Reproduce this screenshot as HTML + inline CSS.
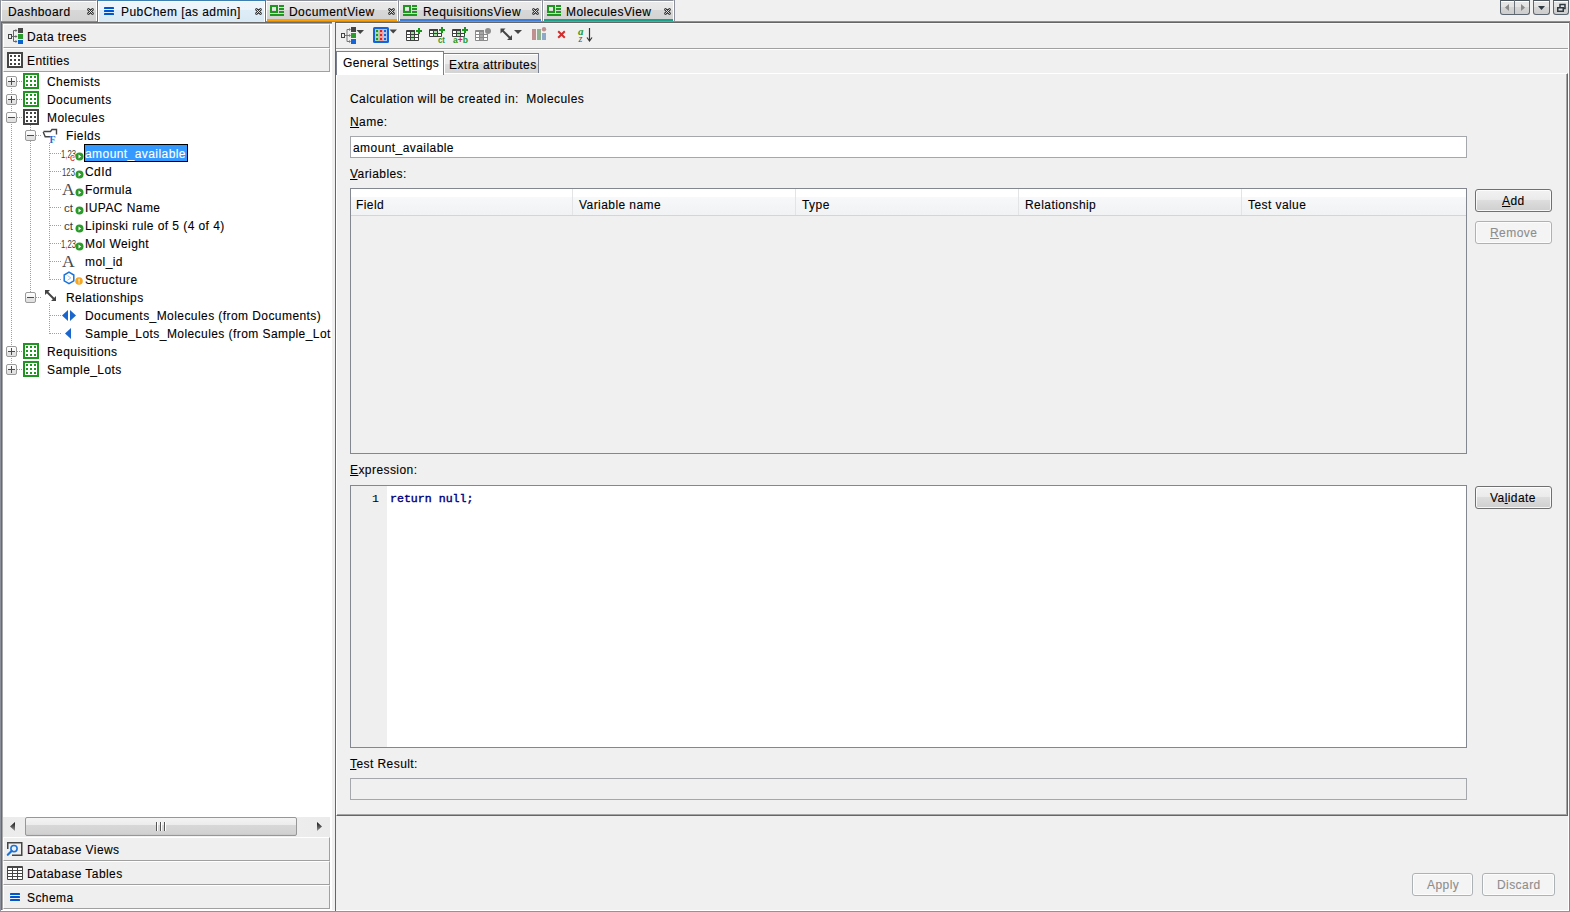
<!DOCTYPE html>
<html><head><meta charset="utf-8">
<style>
*{box-sizing:border-box;margin:0;padding:0}
html,body{width:1570px;height:912px;overflow:hidden;background:#f0f0f0;position:relative;font-family:"Liberation Sans",sans-serif;font-size:12px;color:#000}
.a{position:absolute}
svg.a{overflow:visible}
.t{position:absolute;white-space:pre;line-height:14px;font-size:12px;letter-spacing:0.43px;-webkit-text-stroke:0.1px currentColor}
.tb{position:absolute;top:0;height:21px;border-top:1px solid #8a8f9a;background:linear-gradient(#fff 0,#fff 1px,#e9e9e9 1px,#e6e6e6 9px,#d8d8d8 9px,#d2d2d2 100%)}
.tb .ul{position:absolute;bottom:0;height:2px}
.hdr{position:absolute;left:3px;width:327px;height:24px;background:#efefef;border-top:1px solid #fff;border-left:1px solid #fff;border-bottom:1px solid #a0a0a0;border-right:1px solid #a0a0a0}
.btn{position:absolute;border:1px solid #707070;border-radius:3px;background:linear-gradient(#f2f2f2 0,#ebebeb 45%,#dddddd 50%,#cfcfcf 100%);box-shadow:inset 0 0 0 1px rgba(255,255,255,0.8)}
.btnd{position:absolute;border:1px solid #adb2b5;border-radius:3px;background:#f4f4f4;box-shadow:inset 0 0 0 1px #fcfcfc}
.u{text-decoration:underline;text-underline-offset:1px;text-decoration-thickness:1px}
.gray{color:#8d8d8d}
</style></head><body>
<svg width="0" height="0" style="position:absolute"><defs><linearGradient id="eg" x1="0" y1="0" x2="0" y2="1"><stop offset="0" stop-color="#fff"/><stop offset="0.5" stop-color="#f4f4f4"/><stop offset="0.55" stop-color="#e4e4e4"/><stop offset="1" stop-color="#e0e0e0"/></linearGradient></defs></svg>

<!-- ===== TAB BAR ===== -->
<div class="a" style="left:0;top:0;width:1px;height:912px;background:#8a8f9a"></div>
<div class="tb" style="left:1px;width:96px;border-left:1px solid #fff;border-right:1px solid #fff"></div>
<div class="t" style="left:8px;top:5px">Dashboard</div>

<div class="a" style="left:97px;top:0;width:169px;height:22px;border:1px solid #3c7fb1;border-bottom:none;background:linear-gradient(#fff 0,#fff 1px,#eef6fb 1px,#ecf5fb 9px,#deedf7 9px,#d9e9f5 100%);box-shadow:inset 1px 0 0 #fff,inset -1px 0 0 #fff"></div>
<div class="t" style="left:121px;top:5px">PubChem [as admin]</div>

<div class="tb" style="left:266px;width:132px;border-left:1px solid #fff;border-right:1px solid #fff"><div class="ul" style="left:0;right:0;background:#ff9f00"></div></div>
<div class="t" style="left:289px;top:5px">DocumentView</div>
<div class="a" style="left:398px;top:0;width:1px;height:21px;background:#8a8f9a"></div>
<div class="tb" style="left:399px;width:143px;border-left:1px solid #fff;border-right:1px solid #fff"><div class="ul" style="left:0;right:0;background:#3b7ddd"></div></div>
<div class="t" style="left:423px;top:5px">RequisitionsView</div>
<div class="a" style="left:542px;top:0;width:1px;height:21px;background:#8a8f9a"></div>
<div class="tb" style="left:543px;width:131px;border-left:1px solid #fff;border-right:1px solid #fff"><div class="ul" style="left:0;right:0;background:#18a18a"></div></div>
<div class="t" style="left:566px;top:5px">MoleculesView</div>
<div class="a" style="left:674px;top:0;width:1px;height:21px;background:#8a8f9a"></div>
<svg class="a" style="left:87px;top:8px" width="8" height="8"><path d="M1.5 1.5 L5.5 5.5 M5.5 1.5 L1.5 5.5" stroke="#333" stroke-width="2.7" stroke-linecap="round"/><path d="M1.5 1.5 L5.5 5.5 M5.5 1.5 L1.5 5.5" stroke="#f0f0f0" stroke-width="0.9" stroke-linecap="round"/></svg>
<svg class="a" style="left:255px;top:8px" width="8" height="8"><path d="M1.5 1.5 L5.5 5.5 M5.5 1.5 L1.5 5.5" stroke="#333" stroke-width="2.7" stroke-linecap="round"/><path d="M1.5 1.5 L5.5 5.5 M5.5 1.5 L1.5 5.5" stroke="#f0f0f0" stroke-width="0.9" stroke-linecap="round"/></svg>
<svg class="a" style="left:388px;top:8px" width="8" height="8"><path d="M1.5 1.5 L5.5 5.5 M5.5 1.5 L1.5 5.5" stroke="#333" stroke-width="2.7" stroke-linecap="round"/><path d="M1.5 1.5 L5.5 5.5 M5.5 1.5 L1.5 5.5" stroke="#f0f0f0" stroke-width="0.9" stroke-linecap="round"/></svg>
<svg class="a" style="left:532px;top:8px" width="8" height="8"><path d="M1.5 1.5 L5.5 5.5 M5.5 1.5 L1.5 5.5" stroke="#333" stroke-width="2.7" stroke-linecap="round"/><path d="M1.5 1.5 L5.5 5.5 M5.5 1.5 L1.5 5.5" stroke="#f0f0f0" stroke-width="0.9" stroke-linecap="round"/></svg>
<svg class="a" style="left:664px;top:8px" width="8" height="8"><path d="M1.5 1.5 L5.5 5.5 M5.5 1.5 L1.5 5.5" stroke="#333" stroke-width="2.7" stroke-linecap="round"/><path d="M1.5 1.5 L5.5 5.5 M5.5 1.5 L1.5 5.5" stroke="#f0f0f0" stroke-width="0.9" stroke-linecap="round"/></svg>
<svg class="a" style="left:104px;top:7px" width="10" height="8"><g fill="#0055cc"><rect x="0" y="0" width="10" height="2" rx="0.6"/><rect x="0" y="3" width="10" height="2" rx="0.6"/><rect x="0" y="6" width="10" height="2" rx="0.6"/></g></svg>
<svg class="a" style="left:270px;top:5px" width="14" height="11"><rect x="1" y="1" width="6" height="6" fill="none" stroke="#1f961f" stroke-width="2"/><g fill="#1f961f"><rect x="9" y="0" width="5" height="2"/><rect x="9" y="3" width="5" height="2"/><rect x="9" y="6" width="5" height="2"/><rect x="0" y="9" width="14" height="2"/></g></svg>
<svg class="a" style="left:403px;top:5px" width="14" height="11"><rect x="1" y="1" width="6" height="6" fill="none" stroke="#1f961f" stroke-width="2"/><g fill="#1f961f"><rect x="9" y="0" width="5" height="2"/><rect x="9" y="3" width="5" height="2"/><rect x="9" y="6" width="5" height="2"/><rect x="0" y="9" width="14" height="2"/></g></svg>
<svg class="a" style="left:547px;top:5px" width="14" height="11"><rect x="1" y="1" width="6" height="6" fill="none" stroke="#1f961f" stroke-width="2"/><g fill="#1f961f"><rect x="9" y="0" width="5" height="2"/><rect x="9" y="3" width="5" height="2"/><rect x="9" y="6" width="5" height="2"/><rect x="0" y="9" width="14" height="2"/></g></svg>

<!-- window buttons -->
<div class="a" style="left:1500px;top:0;width:30px;height:15px;border:1px solid #5c666e;border-top:1px solid #4a545c;border-radius:0 0 3px 3px;background:linear-gradient(#fff 0,#fff 1px,#e6e6e6 1px,#e3e3e3 6px,#d6d6d6 6px,#cdcdcd 100%)"></div>
<div class="a" style="left:1533px;top:0;width:17px;height:15px;border:1px solid #5c666e;border-top:1px solid #4a545c;border-radius:0 0 3px 3px;background:linear-gradient(#fff 0,#fff 1px,#e6e6e6 1px,#e3e3e3 6px,#d6d6d6 6px,#cdcdcd 100%)"></div>
<div class="a" style="left:1553px;top:0;width:16px;height:15px;border:1px solid #5c666e;border-top:1px solid #4a545c;border-radius:0 0 3px 3px;background:linear-gradient(#fff 0,#fff 1px,#e6e6e6 1px,#e3e3e3 6px,#d6d6d6 6px,#cdcdcd 100%)"></div>
<div class="a" style="left:1514px;top:0;width:1px;height:14px;background:#6a7178"></div>
<svg class="a" style="left:1494px;top:0" width="80" height="20"><path d="M15 4 L11 7.5 L15 11Z" fill="#8a8a8a"/><path d="M27 4 L31 7.5 L27 11Z" fill="#8a8a8a"/><path d="M44 6 L51 6 L47.5 10Z" fill="#2e3a42"/><rect x="66" y="4.5" width="5" height="4" fill="none" stroke="#2e3a42" stroke-width="1.5"/><rect x="63.75" y="7.75" width="5.5" height="3.5" fill="#e0e0e0" stroke="#2e3a42" stroke-width="1.5"/></svg>

<!-- dark line under tabs -->
<div class="a" style="left:1px;top:21px;width:96px;height:1px;background:#8a909a"></div>
<div class="a" style="left:266px;top:21px;width:1304px;height:1px;background:#8a909a"></div>
<div class="a" style="left:1px;top:22px;width:331px;height:1px;background:#6a6a6a"></div>
<div class="a" style="left:335px;top:22px;width:1234px;height:1px;background:#666"></div>

<!-- ===== LEFT PANEL ===== -->
<div class="a" style="left:1px;top:22px;width:1px;height:888px;background:#6a6a6a"></div>
<div class="a" style="left:2px;top:23px;width:1px;height:887px;background:#a8a8a8"></div>
<div class="a" style="left:2px;top:23px;width:330px;height:1px;background:#a8a8a8"></div>
<div class="a" style="left:3px;top:24px;width:329px;height:886px;background:#fff"></div>
<div class="hdr" style="top:24px"></div>
<div class="t" style="left:27px;top:30px">Data trees</div>
<div class="hdr" style="top:48px"></div>
<div class="t" style="left:27px;top:54px">Entities</div>
<svg class="a" style="left:4px;top:26px" width="20" height="20"><rect x="4.5" y="8.5" width="3" height="4" fill="none" stroke="#444" stroke-width="1"/><path d="M7.5 10.5 H10 M9.5 4.5 V15.5 M9.5 4.5 H12 M9.5 10.5 H12 M9.5 15.5 H12" stroke="#666" stroke-width="1" fill="none"/><path d="M11.5 3 L13.5 4.5 L11.5 6Z M11.5 9 L13.5 10.5 L11.5 12Z M11.5 14 L13.5 15.5 L11.5 17Z" fill="#666"/><rect x="14" y="2" width="5" height="5" fill="#484848"/><rect x="14" y="8" width="5" height="5" fill="#2a9a2a"/><rect x="14" y="14" width="5" height="4" fill="#0a62d0"/></svg>
<svg class="a" style="left:7px;top:52px" width="16" height="16"><rect x="1" y="1" width="14" height="14" fill="#fff" stroke="#444" stroke-width="2"/><g fill="#444"><rect x="3" y="3" width="2" height="2"/><rect x="3" y="7" width="2" height="2"/><rect x="3" y="11" width="2" height="2"/><rect x="7" y="3" width="2" height="2"/><rect x="7" y="7" width="2" height="2"/><rect x="7" y="11" width="2" height="2"/><rect x="11" y="3" width="2" height="2"/><rect x="11" y="7" width="2" height="2"/><rect x="11" y="11" width="2" height="2"/></g></svg>

<!-- tree -->
<div class="a" style="left:3px;top:72px;width:328px;height:745px;overflow:hidden"><div class="a" style="left:-3px;top:-72px;width:1570px;height:912px">
<div class="a" style="left:11px;top:88px;width:1px;height:276px;background:repeating-linear-gradient(180deg,#a0a0a0 0,#a0a0a0 1px,transparent 1px,transparent 2px)"></div>
<div class="a" style="left:30px;top:125px;width:1px;height:167px;background:repeating-linear-gradient(180deg,#a0a0a0 0,#a0a0a0 1px,transparent 1px,transparent 2px)"></div>
<div class="a" style="left:49px;top:143px;width:1px;height:137px;background:repeating-linear-gradient(180deg,#a0a0a0 0,#a0a0a0 1px,transparent 1px,transparent 2px)"></div>
<div class="a" style="left:49px;top:303px;width:1px;height:31px;background:repeating-linear-gradient(180deg,#a0a0a0 0,#a0a0a0 1px,transparent 1px,transparent 2px)"></div>
<div class="a" style="left:17px;top:81px;width:6px;height:1px;background:repeating-linear-gradient(90deg,#a0a0a0 0,#a0a0a0 1px,transparent 1px,transparent 2px)"></div>
<svg class="a" style="left:6px;top:76px" width="11" height="11"><rect x="0.5" y="0.5" width="10" height="10" rx="1.5" fill="url(#eg)" stroke="#9a9a9a"/><rect x="2" y="5" width="7" height="1" fill="#2d4f8e"/><rect x="5" y="2" width="1" height="7" fill="#2d4f8e"/></svg>
<svg class="a" style="left:23px;top:73px" width="16" height="16"><rect x="1" y="1" width="14" height="14" fill="#fff" stroke="#1f961f" stroke-width="2"/><g fill="#1f961f"><rect x="3" y="3" width="2" height="2"/><rect x="3" y="7" width="2" height="2"/><rect x="3" y="11" width="2" height="2"/><rect x="7" y="3" width="2" height="2"/><rect x="7" y="7" width="2" height="2"/><rect x="7" y="11" width="2" height="2"/><rect x="11" y="3" width="2" height="2"/><rect x="11" y="7" width="2" height="2"/><rect x="11" y="11" width="2" height="2"/></g></svg>
<div class="t" style="left:47px;top:75px;">Chemists</div>
<div class="a" style="left:17px;top:99px;width:6px;height:1px;background:repeating-linear-gradient(90deg,#a0a0a0 0,#a0a0a0 1px,transparent 1px,transparent 2px)"></div>
<svg class="a" style="left:6px;top:94px" width="11" height="11"><rect x="0.5" y="0.5" width="10" height="10" rx="1.5" fill="url(#eg)" stroke="#9a9a9a"/><rect x="2" y="5" width="7" height="1" fill="#2d4f8e"/><rect x="5" y="2" width="1" height="7" fill="#2d4f8e"/></svg>
<svg class="a" style="left:23px;top:91px" width="16" height="16"><rect x="1" y="1" width="14" height="14" fill="#fff" stroke="#1f961f" stroke-width="2"/><g fill="#1f961f"><rect x="3" y="3" width="2" height="2"/><rect x="3" y="7" width="2" height="2"/><rect x="3" y="11" width="2" height="2"/><rect x="7" y="3" width="2" height="2"/><rect x="7" y="7" width="2" height="2"/><rect x="7" y="11" width="2" height="2"/><rect x="11" y="3" width="2" height="2"/><rect x="11" y="7" width="2" height="2"/><rect x="11" y="11" width="2" height="2"/></g></svg>
<div class="t" style="left:47px;top:93px;">Documents</div>
<div class="a" style="left:17px;top:117px;width:6px;height:1px;background:repeating-linear-gradient(90deg,#a0a0a0 0,#a0a0a0 1px,transparent 1px,transparent 2px)"></div>
<svg class="a" style="left:6px;top:112px" width="11" height="11"><rect x="0.5" y="0.5" width="10" height="10" rx="1.5" fill="url(#eg)" stroke="#9a9a9a"/><rect x="2" y="5" width="7" height="1" fill="#2d4f8e"/></svg>
<svg class="a" style="left:23px;top:109px" width="16" height="16"><rect x="1" y="1" width="14" height="14" fill="#fff" stroke="#444" stroke-width="2"/><g fill="#444"><rect x="3" y="3" width="2" height="2"/><rect x="3" y="7" width="2" height="2"/><rect x="3" y="11" width="2" height="2"/><rect x="7" y="3" width="2" height="2"/><rect x="7" y="7" width="2" height="2"/><rect x="7" y="11" width="2" height="2"/><rect x="11" y="3" width="2" height="2"/><rect x="11" y="7" width="2" height="2"/><rect x="11" y="11" width="2" height="2"/></g></svg>
<div class="t" style="left:47px;top:111px;">Molecules</div>
<div class="a" style="left:36px;top:135px;width:6px;height:1px;background:repeating-linear-gradient(90deg,#a0a0a0 0,#a0a0a0 1px,transparent 1px,transparent 2px)"></div>
<svg class="a" style="left:25px;top:130px" width="11" height="11"><rect x="0.5" y="0.5" width="10" height="10" rx="1.5" fill="url(#eg)" stroke="#9a9a9a"/><rect x="2" y="5" width="7" height="1" fill="#2d4f8e"/></svg>
<svg class="a" style="left:42px;top:127px" width="16" height="17"><path d="M1.5 4.5 H8.5 L10 2.5 H14.5 V7.5" fill="none" stroke="#444" stroke-width="1.4"/><path d="M1.2 5 L3.2 9.8 H8.5" fill="none" stroke="#444" stroke-width="1.4"/><text x="7.5" y="15.5" font-family="Liberation Serif" font-weight="bold" font-size="10" fill="#1c6fd6">F</text></svg>
<div class="t" style="left:66px;top:129px;">Fields</div>
<div class="a" style="left:50px;top:153px;width:11px;height:1px;background:repeating-linear-gradient(90deg,#a0a0a0 0,#a0a0a0 1px,transparent 1px,transparent 2px)"></div>
<svg class="a" style="left:61px;top:144px" width="22" height="18"><text x="0" y="13.5" font-family="Liberation Sans" font-size="11.5" fill="#3c3c3c" textLength="15" lengthAdjust="spacingAndGlyphs">1<tspan fill="#d22">,</tspan>23</text></svg>
<svg class="a" style="left:69px;top:144px" width="9" height="18"><text x="1" y="16.5" font-family="Liberation Sans" font-size="10" fill="#d22" stroke="#fff" stroke-width="1.5" paint-order="stroke">c</text></svg>
<svg class="a" style="left:75px;top:152px" width="9" height="9"><circle cx="4.5" cy="4.5" r="4" fill="#2b9a2b"/><path d="M3.5 2.5 L6.2 4.5 L3.5 6.5Z" fill="#fff"/></svg>
<div class="a" style="left:84px;top:144px;width:104px;height:18px;background:#3399ff;border:1px solid #000"></div>
<div class="t" style="left:85px;top:147px;color:#fff">amount_available</div>
<div class="a" style="left:50px;top:171px;width:11px;height:1px;background:repeating-linear-gradient(90deg,#a0a0a0 0,#a0a0a0 1px,transparent 1px,transparent 2px)"></div>
<svg class="a" style="left:62px;top:162px" width="16" height="18"><text x="0" y="13.5" font-family="Liberation Sans" font-size="11" fill="#3c3c3c" textLength="13" lengthAdjust="spacingAndGlyphs">123</text></svg>
<svg class="a" style="left:75px;top:170px" width="9" height="9"><circle cx="4.5" cy="4.5" r="4" fill="#2b9a2b"/><path d="M3.5 2.5 L6.2 4.5 L3.5 6.5Z" fill="#fff"/></svg>
<div class="t" style="left:85px;top:165px;">CdId</div>
<div class="a" style="left:50px;top:189px;width:11px;height:1px;background:repeating-linear-gradient(90deg,#a0a0a0 0,#a0a0a0 1px,transparent 1px,transparent 2px)"></div>
<svg class="a" style="left:61px;top:180px" width="16" height="18"><text x="1" y="15" font-family="Liberation Serif" font-size="17.5" fill="#4a4a4a">A</text></svg>
<svg class="a" style="left:75px;top:188px" width="9" height="9"><circle cx="4.5" cy="4.5" r="4" fill="#2b9a2b"/><path d="M3.5 2.5 L6.2 4.5 L3.5 6.5Z" fill="#fff"/></svg>
<div class="t" style="left:85px;top:183px;">Formula</div>
<div class="a" style="left:50px;top:207px;width:11px;height:1px;background:repeating-linear-gradient(90deg,#a0a0a0 0,#a0a0a0 1px,transparent 1px,transparent 2px)"></div>
<svg class="a" style="left:64px;top:198px" width="14" height="18"><text x="0" y="13.5" font-family="Liberation Sans" font-size="11.5" fill="#3c3c3c" textLength="9" lengthAdjust="spacingAndGlyphs">ct</text></svg>
<svg class="a" style="left:75px;top:206px" width="9" height="9"><circle cx="4.5" cy="4.5" r="4" fill="#2b9a2b"/><path d="M3.5 2.5 L6.2 4.5 L3.5 6.5Z" fill="#fff"/></svg>
<div class="t" style="left:85px;top:201px;">IUPAC Name</div>
<div class="a" style="left:50px;top:225px;width:11px;height:1px;background:repeating-linear-gradient(90deg,#a0a0a0 0,#a0a0a0 1px,transparent 1px,transparent 2px)"></div>
<svg class="a" style="left:64px;top:216px" width="14" height="18"><text x="0" y="13.5" font-family="Liberation Sans" font-size="11.5" fill="#3c3c3c" textLength="9" lengthAdjust="spacingAndGlyphs">ct</text></svg>
<svg class="a" style="left:75px;top:224px" width="9" height="9"><circle cx="4.5" cy="4.5" r="4" fill="#2b9a2b"/><path d="M3.5 2.5 L6.2 4.5 L3.5 6.5Z" fill="#fff"/></svg>
<div class="t" style="left:85px;top:219px;">Lipinski rule of 5 (4 of 4)</div>
<div class="a" style="left:50px;top:243px;width:11px;height:1px;background:repeating-linear-gradient(90deg,#a0a0a0 0,#a0a0a0 1px,transparent 1px,transparent 2px)"></div>
<svg class="a" style="left:61px;top:234px" width="22" height="18"><text x="0" y="13.5" font-family="Liberation Sans" font-size="11.5" fill="#3c3c3c" textLength="15" lengthAdjust="spacingAndGlyphs">1<tspan fill="#d22">,</tspan>23</text></svg>
<svg class="a" style="left:75px;top:242px" width="9" height="9"><circle cx="4.5" cy="4.5" r="4" fill="#2b9a2b"/><path d="M3.5 2.5 L6.2 4.5 L3.5 6.5Z" fill="#fff"/></svg>
<div class="t" style="left:85px;top:237px;">Mol Weight</div>
<div class="a" style="left:50px;top:261px;width:11px;height:1px;background:repeating-linear-gradient(90deg,#a0a0a0 0,#a0a0a0 1px,transparent 1px,transparent 2px)"></div>
<svg class="a" style="left:61px;top:252px" width="16" height="18"><text x="1" y="15" font-family="Liberation Serif" font-size="17.5" fill="#4a4a4a">A</text></svg>
<div class="t" style="left:85px;top:255px;">mol_id</div>
<div class="a" style="left:50px;top:279px;width:11px;height:1px;background:repeating-linear-gradient(90deg,#a0a0a0 0,#a0a0a0 1px,transparent 1px,transparent 2px)"></div>
<svg class="a" style="left:63px;top:271px" width="13" height="14"><path d="M6 1.2 L10.8 4 V9.8 L6 12.6 L1.2 9.8 V4Z" fill="#fff" stroke="#1a73d9" stroke-width="1.5"/><path d="M4.5 4.5 L7.8 6.9 L4.5 9.3" fill="none" stroke="#8ab8ee" stroke-width="0.8"/></svg>
<svg class="a" style="left:75px;top:277px" width="8" height="8"><circle cx="4" cy="4" r="3.8" fill="#f5a623"/><rect x="3.5" y="1.8" width="1.1" height="2.8" fill="#fff"/><rect x="3.5" y="5.4" width="1.1" height="1" fill="#fff"/></svg>
<div class="t" style="left:85px;top:273px;">Structure</div>
<div class="a" style="left:36px;top:297px;width:6px;height:1px;background:repeating-linear-gradient(90deg,#a0a0a0 0,#a0a0a0 1px,transparent 1px,transparent 2px)"></div>
<svg class="a" style="left:25px;top:292px" width="11" height="11"><rect x="0.5" y="0.5" width="10" height="10" rx="1.5" fill="url(#eg)" stroke="#9a9a9a"/><rect x="2" y="5" width="7" height="1" fill="#2d4f8e"/></svg>
<svg class="a" style="left:44px;top:289px" width="14" height="14"><path d="M2.5 2.5 L11 11" stroke="#444" stroke-width="2"/><path d="M1 1 H6 L1 6Z M12 12 H7 L12 7Z" fill="#444"/></svg>
<div class="t" style="left:66px;top:291px;">Relationships</div>
<div class="a" style="left:50px;top:315px;width:11px;height:1px;background:repeating-linear-gradient(90deg,#a0a0a0 0,#a0a0a0 1px,transparent 1px,transparent 2px)"></div>
<svg class="a" style="left:62px;top:306px" width="15" height="18"><path d="M0 9.5 L6 4 V15Z M8 4 L14 9.5 L8 15Z" fill="#1a66cc"/></svg>
<div class="t" style="left:85px;top:309px;">Documents_Molecules (from Documents)</div>
<div class="a" style="left:50px;top:333px;width:11px;height:1px;background:repeating-linear-gradient(90deg,#a0a0a0 0,#a0a0a0 1px,transparent 1px,transparent 2px)"></div>
<svg class="a" style="left:64px;top:324px" width="8" height="18"><path d="M1 9.5 L7 4 V15Z" fill="#1a66cc"/></svg>
<div class="t" style="left:85px;top:327px;">Sample_Lots_Molecules (from Sample_Lots)</div>
<div class="a" style="left:17px;top:351px;width:6px;height:1px;background:repeating-linear-gradient(90deg,#a0a0a0 0,#a0a0a0 1px,transparent 1px,transparent 2px)"></div>
<svg class="a" style="left:6px;top:346px" width="11" height="11"><rect x="0.5" y="0.5" width="10" height="10" rx="1.5" fill="url(#eg)" stroke="#9a9a9a"/><rect x="2" y="5" width="7" height="1" fill="#2d4f8e"/><rect x="5" y="2" width="1" height="7" fill="#2d4f8e"/></svg>
<svg class="a" style="left:23px;top:343px" width="16" height="16"><rect x="1" y="1" width="14" height="14" fill="#fff" stroke="#1f961f" stroke-width="2"/><g fill="#1f961f"><rect x="3" y="3" width="2" height="2"/><rect x="3" y="7" width="2" height="2"/><rect x="3" y="11" width="2" height="2"/><rect x="7" y="3" width="2" height="2"/><rect x="7" y="7" width="2" height="2"/><rect x="7" y="11" width="2" height="2"/><rect x="11" y="3" width="2" height="2"/><rect x="11" y="7" width="2" height="2"/><rect x="11" y="11" width="2" height="2"/></g></svg>
<div class="t" style="left:47px;top:345px;">Requisitions</div>
<div class="a" style="left:17px;top:369px;width:6px;height:1px;background:repeating-linear-gradient(90deg,#a0a0a0 0,#a0a0a0 1px,transparent 1px,transparent 2px)"></div>
<svg class="a" style="left:6px;top:364px" width="11" height="11"><rect x="0.5" y="0.5" width="10" height="10" rx="1.5" fill="url(#eg)" stroke="#9a9a9a"/><rect x="2" y="5" width="7" height="1" fill="#2d4f8e"/><rect x="5" y="2" width="1" height="7" fill="#2d4f8e"/></svg>
<svg class="a" style="left:23px;top:361px" width="16" height="16"><rect x="1" y="1" width="14" height="14" fill="#fff" stroke="#1f961f" stroke-width="2"/><g fill="#1f961f"><rect x="3" y="3" width="2" height="2"/><rect x="3" y="7" width="2" height="2"/><rect x="3" y="11" width="2" height="2"/><rect x="7" y="3" width="2" height="2"/><rect x="7" y="7" width="2" height="2"/><rect x="7" y="11" width="2" height="2"/><rect x="11" y="3" width="2" height="2"/><rect x="11" y="7" width="2" height="2"/><rect x="11" y="11" width="2" height="2"/></g></svg>
<div class="t" style="left:47px;top:363px;">Sample_Lots</div>
</div></div>

<!-- scrollbar -->
<div class="a" style="left:3px;top:817px;width:327px;height:20px;background:linear-gradient(90deg,#ebebeb,#f4f4f4 50%,#ebebeb)"></div>
<div class="a" style="left:25px;top:817px;width:272px;height:19px;border:1px solid #979797;border-radius:2px;background:linear-gradient(#f4f4f4 0,#ececec 40%,#d8d8d8 40%,#d2d2d2 90%,#c8c8c8 100%)"></div>
<svg class="a" style="left:0;top:0" width="340" height="840">
<defs><linearGradient id="ag" x1="0" y1="0" x2="0" y2="1"><stop offset="0" stop-color="#111"/><stop offset="1" stop-color="#999"/></linearGradient></defs>
<path d="M15 822 L10 826.5 L15 831Z" fill="url(#ag)"/>
<path d="M317 822 L322 826.5 L317 831Z" fill="url(#ag)"/>
<g fill="#555"><rect x="156" y="822" width="1" height="9"/><rect x="160" y="822" width="1" height="9"/><rect x="164" y="822" width="1" height="9"/></g>
<g fill="#fff"><rect x="157" y="822" width="1" height="9"/><rect x="161" y="822" width="1" height="9"/><rect x="165" y="822" width="1" height="9"/></g>
</svg>

<div class="hdr" style="top:837px"></div>
<div class="t" style="left:27px;top:843px">Database Views</div>
<div class="hdr" style="top:861px"></div>
<div class="t" style="left:27px;top:867px">Database Tables</div>
<div class="hdr" style="top:885px"></div>
<div class="t" style="left:27px;top:891px">Schema</div>
<svg class="a" style="left:0;top:836px" width="30" height="50"><path d="M7.75 13 V6.75 H21.75 V19.25 H12" fill="none" stroke="#454545" stroke-width="1.5"/><circle cx="14" cy="12.6" r="3.1" fill="none" stroke="#1a73d9" stroke-width="1.6"/><path d="M11.6 15 L7.8 18.8" stroke="#1a73d9" stroke-width="2.2" stroke-linecap="round"/></svg>
<svg class="a" style="left:7px;top:866px" width="16" height="14"><rect x="0" y="0" width="16" height="14" rx="1" fill="#454545"/><rect x="1" y="2" width="4" height="2" fill="#fff"/><rect x="1" y="5" width="4" height="2" fill="#fff"/><rect x="1" y="8" width="4" height="2" fill="#fff"/><rect x="1" y="11" width="4" height="2" fill="#fff"/><rect x="6" y="2" width="4" height="2" fill="#fff"/><rect x="6" y="5" width="4" height="2" fill="#fff"/><rect x="6" y="8" width="4" height="2" fill="#fff"/><rect x="6" y="11" width="4" height="2" fill="#fff"/><rect x="11" y="2" width="4" height="2" fill="#fff"/><rect x="11" y="5" width="4" height="2" fill="#fff"/><rect x="11" y="8" width="4" height="2" fill="#fff"/><rect x="11" y="11" width="4" height="2" fill="#fff"/></svg>
<svg class="a" style="left:10px;top:893px" width="10" height="8"><g fill="#0055cc"><rect x="0" y="0" width="10" height="2" rx="0.6"/><rect x="0" y="3" width="10" height="2" rx="0.6"/><rect x="0" y="6" width="10" height="2" rx="0.6"/></g></svg>
<div class="a" style="left:1px;top:910px;width:334px;height:1px;background:#fff"></div>
<div class="a" style="left:0;top:911px;width:335px;height:1px;background:#8e939c"></div>

<!-- ===== RIGHT PANEL ===== -->
<div class="a" style="left:335px;top:22px;width:1px;height:890px;background:#666"></div>
<div class="a" style="left:1569px;top:21px;width:1px;height:891px;background:#80858f"></div>
<div class="a" style="left:1568px;top:23px;width:1px;height:888px;background:#fff"></div>
<div class="a" style="left:336px;top:910px;width:1233px;height:1px;background:#fff"></div>
<div class="a" style="left:335px;top:911px;width:1235px;height:1px;background:#8e939c"></div>
<div class="a" style="left:336px;top:23px;width:1232px;height:1px;background:#f8f8f8"></div>

<!-- toolbar -->
<svg class="a" style="left:338px;top:25px" width="30" height="20"><rect x="3.5" y="8.5" width="3" height="4" fill="none" stroke="#444" stroke-width="1"/><path d="M6.5 10.5 H9 M9 4.5 V16.5 M9 4.5 H11 M9 10.5 H11 M9 16.5 H11" stroke="#777" stroke-width="1" fill="none"/><path d="M11 3 L13 4.5 L11 6Z M11 9 L13 10.5 L11 12Z M11 15 L13 16.5 L11 18Z" fill="#777"/><rect x="13" y="2" width="5" height="5" fill="#444"/><rect x="13" y="8" width="5" height="5" fill="#2a9a2a"/><rect x="13" y="14" width="5" height="5" fill="#1565d8"/><path d="M18.5 5 H26 L22.2 9Z" fill="#444"/></svg>
<svg class="a" style="left:373px;top:27px" width="26" height="17"><rect x="0" y="0" width="16" height="16" rx="1.5" fill="#1565d8"/><rect x="2" y="2" width="4" height="12" fill="#a8d8a8"/><rect x="6" y="2" width="4" height="12" fill="#f0a0a0"/><rect x="10" y="2" width="4" height="12" fill="#a8c8f0"/><rect x="3" y="3" width="2" height="2" fill="#1f961f"/><rect x="3" y="7" width="2" height="2" fill="#1f961f"/><rect x="3" y="11" width="2" height="2" fill="#1f961f"/><rect x="7" y="3" width="2" height="2" fill="#d22"/><rect x="7" y="7" width="2" height="2" fill="#d22"/><rect x="7" y="11" width="2" height="2" fill="#d22"/><rect x="11" y="3" width="2" height="2" fill="#1565d8"/><rect x="11" y="7" width="2" height="2" fill="#1565d8"/><rect x="11" y="11" width="2" height="2" fill="#1565d8"/><path d="M16.5 2.5 H24 L20.2 6.5Z" fill="#444"/></svg>
<svg class="a" style="left:406px;top:27px" width="18" height="18"><g transform="translate(0,3)"><rect x="0" y="0" width="13" height="11" rx="1" fill="#404040"/><rect x="1" y="2" width="3" height="2" fill="#fff"/><rect x="5" y="2" width="3" height="2" fill="#a0e0a0"/><rect x="1" y="5" width="3" height="2" fill="#fff"/><rect x="5" y="5" width="3" height="2" fill="#a0e0a0"/><rect x="9" y="5" width="3" height="2" fill="#fff"/><rect x="1" y="8" width="3" height="2" fill="#fff"/><rect x="5" y="8" width="3" height="2" fill="#a0e0a0"/><rect x="9" y="8" width="3" height="2" fill="#fff"/><rect x="9" y="0" width="4" height="4" fill="#f0f0f0"/></g><path d="M13 1 V7 M10 4 H16" stroke="#1a941a" stroke-width="2"/></svg>
<svg class="a" style="left:429px;top:27px" width="18" height="18"><g transform="translate(0,2)"><rect x="0" y="0" width="13" height="8" rx="1" fill="#404040"/><rect x="1" y="2" width="3" height="2" fill="#fff"/><rect x="5" y="2" width="3" height="2" fill="#a0e0a0"/><rect x="1" y="5" width="3" height="2" fill="#fff"/><rect x="5" y="5" width="3" height="2" fill="#a0e0a0"/><rect x="9" y="5" width="3" height="2" fill="#fff"/><rect x="9" y="0" width="4" height="4" fill="#f0f0f0"/></g><path d="M13 0 V6 M10 3 H16" stroke="#1a941a" stroke-width="2"/><text x="9" y="16" font-family="Liberation Sans" font-weight="bold" font-size="9" fill="#1f961f" textLength="7" lengthAdjust="spacingAndGlyphs">ct</text></svg>
<svg class="a" style="left:452px;top:27px" width="18" height="18"><g transform="translate(0,2)"><rect x="0" y="0" width="13" height="8" rx="1" fill="#404040"/><rect x="1" y="2" width="3" height="2" fill="#fff"/><rect x="5" y="2" width="3" height="2" fill="#a0e0a0"/><rect x="1" y="5" width="3" height="2" fill="#fff"/><rect x="5" y="5" width="3" height="2" fill="#a0e0a0"/><rect x="9" y="5" width="3" height="2" fill="#fff"/><rect x="9" y="0" width="4" height="4" fill="#f0f0f0"/></g><path d="M13 0 V6 M10 3 H16" stroke="#1a941a" stroke-width="2"/><text x="1" y="16" font-family="Liberation Sans" font-weight="bold" font-size="8.5" fill="#1f961f" textLength="15" lengthAdjust="spacingAndGlyphs">a<tspan fill="#d22">+</tspan>b</text></svg>
<svg class="a" style="left:475px;top:27px" width="18" height="16"><g transform="translate(0,3)"><rect x="0" y="0" width="13" height="11" rx="1" fill="#8a8a8a"/><rect x="1" y="2" width="3" height="2" fill="#fff"/><rect x="5" y="2" width="3" height="2" fill="#a8a8a8"/><rect x="1" y="5" width="3" height="2" fill="#fff"/><rect x="5" y="5" width="3" height="2" fill="#a8a8a8"/><rect x="9" y="5" width="3" height="2" fill="#fff"/><rect x="1" y="8" width="3" height="2" fill="#fff"/><rect x="5" y="8" width="3" height="2" fill="#a8a8a8"/><rect x="9" y="8" width="3" height="2" fill="#fff"/><rect x="9" y="0" width="4" height="4" fill="#f0f0f0"/></g><circle cx="13" cy="4" r="3" fill="#8e8e8e"/></svg>
<svg class="a" style="left:500px;top:28px" width="24" height="14"><path d="M2.5 2.5 L10 10" stroke="#444" stroke-width="2"/><path d="M0.5 0.5 H5.5 L0.5 5.5Z M12 12 H7 L12 7Z" fill="#444"/><path d="M14 2 H22 L18 6Z" fill="#444"/></svg>
<svg class="a" style="left:531px;top:27px" width="17" height="14"><rect x="1" y="2" width="4" height="11" fill="#c09090"/><rect x="6" y="2" width="4" height="11" fill="#90b090"/><rect x="11" y="6" width="4" height="7" fill="#90a8c8"/><circle cx="13" cy="2.3" r="2.2" fill="#c09090"/></svg>
<svg class="a" style="left:557px;top:30px" width="10" height="10"><path d="M1.2 1.2 L7.8 7.8 M7.8 1.2 L1.2 7.8" stroke="#d42b2b" stroke-width="2"/></svg>
<svg class="a" style="left:578px;top:27px" width="16" height="16"><text x="0" y="7.5" font-family="Liberation Serif" font-style="italic" font-weight="bold" font-size="11" fill="#2a9a2a">a</text><text x="0.5" y="14.5" font-family="Liberation Serif" font-style="italic" font-size="10" fill="#555">z</text><path d="M11.5 1 V13" stroke="#333" stroke-width="1.2"/><path d="M9 10.5 L11.5 14 L14 10.5" fill="none" stroke="#333" stroke-width="1.2"/></svg>
<div class="a" style="left:336px;top:48px;width:1232px;height:1px;background:#a0a0a0"></div>
<div class="a" style="left:336px;top:49px;width:1232px;height:1px;background:#fff"></div>

<!-- content panel -->
<div class="a" style="left:336px;top:73px;width:1232px;height:743px;border-top:1px solid #fff;border-left:1px solid #fff;border-right:1px solid #666;border-bottom:1px solid #666;box-shadow:inset -1px -1px 0 #a4a4a4"></div>

<!-- tabs -->
<div class="a" style="left:336px;top:51px;width:108px;height:24px;background:#fff;border:1px solid #7a8090;border-bottom:none"></div>
<div class="t" style="left:343px;top:56px">General Settings</div>
<div class="a" style="left:444px;top:53px;width:95px;height:20px;background:linear-gradient(#f0f0f0,#ebebeb 50%,#dcdcdc 50%,#d4d4d4);border:1px solid #7a8090;border-bottom:none;border-left:none;box-shadow:inset 1px 1px 0 #fff"></div>
<div class="t" style="left:449px;top:58px">Extra attributes</div>

<div class="t" style="left:350px;top:92px">Calculation will be created in:  Molecules</div>
<div class="t" style="left:350px;top:115px"><span class="u">N</span>ame:</div>
<div class="a" style="left:350px;top:136px;width:1117px;height:22px;background:#fff;border:1px solid #a4a8ad"></div>
<div class="t" style="left:353px;top:141px">amount_available</div>
<div class="t" style="left:350px;top:167px"><span class="u">V</span>ariables:</div>

<!-- table -->
<div class="a" style="left:350px;top:188px;width:1117px;height:266px;border:1px solid #828790;background:#f0f0f0"></div>
<div class="a" style="left:351px;top:189px;width:1115px;height:27px;background:linear-gradient(#fff 0,#fff 8px,#f7f8fa 8px,#f1f2f4 100%);border-bottom:1px solid #d5d5d5"></div>
<div class="a" style="left:572px;top:189px;width:1px;height:26px;background:#e3e4e6"></div>
<div class="a" style="left:795px;top:189px;width:1px;height:26px;background:#e3e4e6"></div>
<div class="a" style="left:1018px;top:189px;width:1px;height:26px;background:#e3e4e6"></div>
<div class="a" style="left:1241px;top:189px;width:1px;height:26px;background:#e3e4e6"></div>
<div class="t" style="left:356px;top:198px">Field</div>
<div class="t" style="left:579px;top:198px">Variable name</div>
<div class="t" style="left:802px;top:198px">Type</div>
<div class="t" style="left:1025px;top:198px">Relationship</div>
<div class="t" style="left:1248px;top:198px">Test value</div>

<div class="btn" style="left:1475px;top:189px;width:77px;height:23px"></div>
<div class="t" style="left:1502px;top:194px"><span class="u">A</span>dd</div>
<div class="btnd" style="left:1475px;top:221px;width:77px;height:23px"></div>
<div class="t gray" style="left:1490px;top:226px"><span class="u">R</span>emove</div>

<div class="t" style="left:350px;top:463px"><span class="u">E</span>xpression:</div>
<div class="a" style="left:350px;top:485px;width:1117px;height:263px;border:1px solid #828790;background:#fff"></div>
<div class="a" style="left:351px;top:486px;width:36px;height:261px;background:#efefef"></div>
<div class="t" style="left:372px;top:492px;font-family:'Liberation Mono';font-size:11.6px;letter-spacing:0">1</div>
<div class="t" style="left:390px;top:492px;font-family:'Liberation Mono';font-size:11.6px;color:#000080;-webkit-text-stroke:0.4px #000080;letter-spacing:0">return null;</div>

<div class="btn" style="left:1475px;top:486px;width:77px;height:23px"></div>
<div class="t" style="left:1490px;top:491px">Va<span class="u">l</span>idate</div>

<div class="t" style="left:350px;top:757px"><span class="u">T</span>est Result:</div>
<div class="a" style="left:350px;top:778px;width:1117px;height:22px;border:1px solid #a4a8ad;background:#f0f0f0"></div>

<div class="btnd" style="left:1412px;top:873px;width:61px;height:23px"></div>
<div class="t gray" style="left:1427px;top:878px">Apply</div>
<div class="btnd" style="left:1482px;top:873px;width:73px;height:23px"></div>
<div class="t gray" style="left:1497px;top:878px">Discard</div>

</body></html>
